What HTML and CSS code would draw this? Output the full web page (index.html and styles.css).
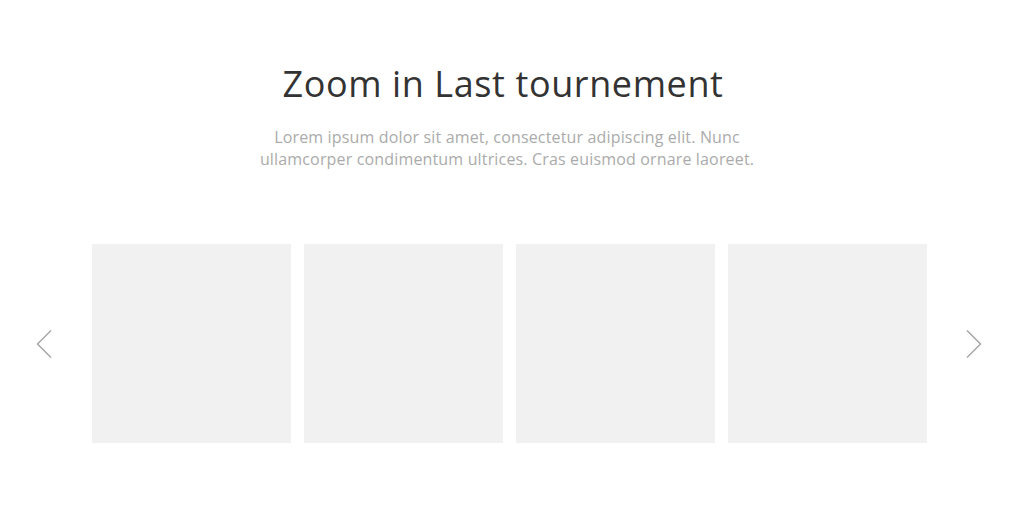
FILE: index.html
```html
<!DOCTYPE html>
<html>
<head>
<meta charset="utf-8">
<link rel="stylesheet" href="styles.css">
</head>
<body>
<section class="section">
  <h1 class="title">Zoom in Last tournement</h1>
  <p class="lead">Lorem ipsum dolor sit amet, consectetur adipiscing elit. Nunc ullamcorper condimentum ultrices. Cras euismod ornare laoreet.</p>
  <div class="carousel">
    <button class="arrow arrow-prev" aria-label="Previous">
      <svg width="16" height="28" viewBox="0 0 16 28"><path d="M15 0.5 L1.5 14 L15 27.5" fill="none" stroke="#a8a8a8" stroke-width="1.5"/></svg>
    </button>
    <div class="track">
      <div class="card"></div>
      <div class="card"></div>
      <div class="card"></div>
      <div class="card"></div>
    </div>
    <button class="arrow arrow-next" aria-label="Next">
      <svg width="16" height="28" viewBox="0 0 16 28"><path d="M1 0.5 L14.5 14 L1 27.5" fill="none" stroke="#a8a8a8" stroke-width="1.5"/></svg>
    </button>
  </div>
</section>
</body>
</html>
```
FILE: styles.css
```css
html, body {
  margin: 0;
  padding: 0;
  background: #ffffff;
}
body {
  font-family: "Open Sans", "Liberation Sans", sans-serif;
}
.section {
  padding-top: 60px;
  display: flex;
  flex-direction: column;
  align-items: center;
}
.title {
  margin: 0 14px 0 0;
  font-size: 36px;
  font-weight: 400;
  line-height: 48px;
  letter-spacing: 0.6px;
  color: #333333;
}
.lead {
  margin: 18px 6px 0 0;
  width: 534px;
  text-align: center;
  font-size: 16px;
  line-height: 22px;
  letter-spacing: 0.16px;
  color: #ababab;
}
.carousel {
  margin-top: 74px;
  display: flex;
  align-items: center;
  justify-content: center;
  padding-right: 2px;
}
.arrow {
  background: none;
  border: 0;
  padding: 0;
  width: 16px;
  height: 28px;
  display: flex;
}
.arrow-prev {
  margin-right: 40px;
}
.arrow-next {
  margin-left: 39px;
}
.track {
  display: flex;
  gap: 13px;
}
.card {
  width: 199px;
  height: 199px;
  background: #f1f1f1;
}
```
